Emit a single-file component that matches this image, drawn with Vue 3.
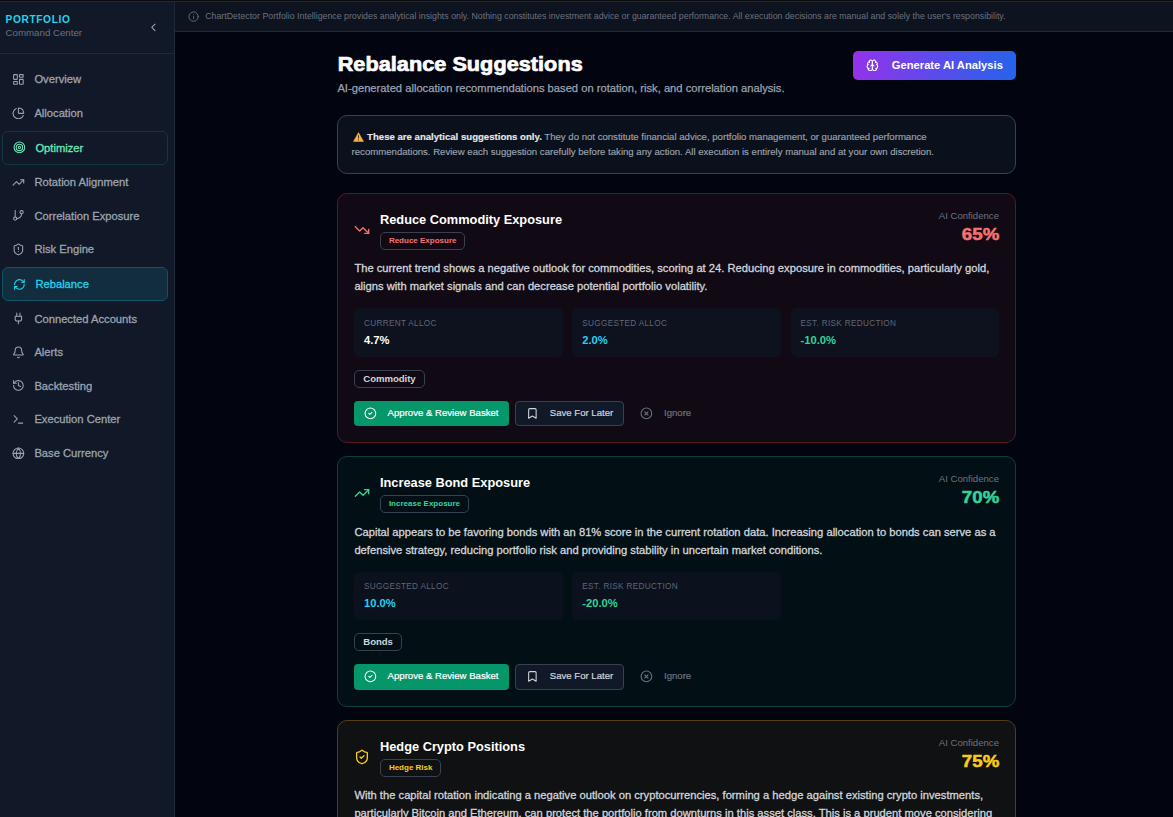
<script setup>
const icons = {
    dashboard: '<rect width="7" height="9" x="3" y="3" rx="1"/><rect width="7" height="5" x="14" y="3" rx="1"/><rect width="7" height="9" x="14" y="12" rx="1"/><rect width="7" height="5" x="3" y="16" rx="1"/>',
    pie: '<path d="M21 12c.552 0 1.005-.449.95-.998a10 10 0 0 0-8.953-8.951c-.55-.055-.998.398-.998.95v8a1 1 0 0 0 1 1z"/><path d="M21.21 15.89A10 10 0 1 1 8 2.83"/>',
    target: '<circle cx="12" cy="12" r="10"/><circle cx="12" cy="12" r="6"/><circle cx="12" cy="12" r="2"/>',
    up: '<path d="M16 7h6v6"/><path d="m22 7-8.5 8.5-5-5L2 17"/>',
    down: '<path d="M16 17h6v-6"/><path d="m22 17-8.5-8.5-5 5L2 7"/>',
    branch: '<line x1="6" x2="6" y1="3" y2="15"/><circle cx="18" cy="6" r="3"/><circle cx="6" cy="18" r="3"/><path d="M18 9a9 9 0 0 1-9 9"/>',
    shieldAlert: '<path d="M20 13c0 5-3.5 7.5-7.66 8.95a1 1 0 0 1-.67-.01C7.5 20.5 4 18 4 13V6a1 1 0 0 1 1-1c2 0 4.5-1.2 6.24-2.72a1.17 1.17 0 0 1 1.52 0C14.51 3.81 17 5 19 5a1 1 0 0 1 1 1z"/><path d="M12 8v4"/><path d="M12 16h.01"/>',
    shieldCheck: '<path d="M20 13c0 5-3.5 7.5-7.66 8.95a1 1 0 0 1-.67-.01C7.5 20.5 4 18 4 13V6a1 1 0 0 1 1-1c2 0 4.5-1.2 6.24-2.72a1.17 1.17 0 0 1 1.52 0C14.51 3.81 17 5 19 5a1 1 0 0 1 1 1z"/><path d="m9 12 2 2 4-4"/>',
    refresh: '<path d="M3 12a9 9 0 0 1 9-9 9.75 9.75 0 0 1 6.74 2.74L21 8"/><path d="M21 3v5h-5"/><path d="M21 12a9 9 0 0 1-9 9 9.75 9.75 0 0 1-6.74-2.74L3 16"/><path d="M8 16H3v5"/>',
    plug: '<path d="M12 22v-5"/><path d="M9 8V2"/><path d="M15 8V2"/><path d="M18 8v5a4 4 0 0 1-4 4h-4a4 4 0 0 1-4-4V8Z"/>',
    bell: '<path d="M10.268 21a2 2 0 0 0 3.464 0"/><path d="M3.262 15.326A1 1 0 0 0 4 17h16a1 1 0 0 0 .74-1.673C19.41 13.956 18 12.499 18 8A6 6 0 0 0 6 8c0 4.499-1.411 5.956-2.738 7.326"/>',
    history: '<path d="M3 12a9 9 0 1 0 9-9 9.75 9.75 0 0 0-6.74 2.74L3 8"/><path d="M3 3v5h5"/><path d="M12 7v5l4 2"/>',
    terminal: '<path d="m4 17 6-6-6-6"/><path d="M12 19h8"/>',
    globe: '<circle cx="12" cy="12" r="10"/><path d="M12 2a14.5 14.5 0 0 0 0 20 14.5 14.5 0 0 0 0-20"/><path d="M2 12h20"/>',
    info: '<circle cx="12" cy="12" r="10"/><path d="M12 16v-4"/><path d="M12 8h.01"/>',
    chevron: '<path d="m15 18-6-6 6-6"/>',
    brain: '<path d="M12 5a3 3 0 1 0-5.997.125 4 4 0 0 0-2.526 5.77 4 4 0 0 0 .556 6.588A4 4 0 1 0 12 18Z"/><path d="M12 5a3 3 0 1 1 5.997.125 4 4 0 0 1 2.526 5.77 4 4 0 0 1-.556 6.588A4 4 0 1 1 12 18Z"/><path d="M15 13a4.5 4.5 0 0 1-3-4 4.5 4.5 0 0 1-3 4"/><path d="M17.599 6.5a3 3 0 0 0 .399-1.375"/><path d="M6.003 5.125A3 3 0 0 0 6.401 6.5"/><path d="M3.477 10.896a4 4 0 0 1 .585-.396"/><path d="M19.938 10.5a4 4 0 0 1 .585.396"/><path d="M6 18a4 4 0 0 1-1.967-.516"/><path d="M19.967 17.484A4 4 0 0 1 18 18"/>',
    check: '<circle cx="12" cy="12" r="10"/><path d="m9 12 2 2 4-4"/>',
    bookmark: '<path d="m19 21-7-4-7 4V5a2 2 0 0 1 2-2h10a2 2 0 0 1 2 2v16z"/>',
    cross: '<circle cx="12" cy="12" r="10"/><path d="m15 9-6 6"/><path d="m9 9 6 6"/>'
}

const nav = [
    { label: 'Overview', icon: 'dashboard' },
    { label: 'Allocation', icon: 'pie' },
    { label: 'Optimizer', icon: 'target', state: 'featured' },
    { label: 'Rotation Alignment', icon: 'up' },
    { label: 'Correlation Exposure', icon: 'branch' },
    { label: 'Risk Engine', icon: 'shieldAlert' },
    { label: 'Rebalance', icon: 'refresh', state: 'active' },
    { label: 'Connected Accounts', icon: 'plug' },
    { label: 'Alerts', icon: 'bell' },
    { label: 'Backtesting', icon: 'history' },
    { label: 'Execution Center', icon: 'terminal' },
    { label: 'Base Currency', icon: 'globe' }
]

const suggestions = [
    {
        title: 'Reduce Commodity Exposure',
        badge: 'Reduce Exposure',
        tone: 'red',
        icon: 'down',
        confidence: '65%',
        lines: [
            'The current trend shows a negative outlook for commodities, scoring at 24. Reducing exposure in commodities, particularly gold,',
            'aligns with market signals and can decrease potential portfolio volatility.'
        ],
        stats: [
            { label: 'Current Alloc', value: '4.7%', color: 'white' },
            { label: 'Suggested Alloc', value: '2.0%', color: 'cyan' },
            { label: 'Est. Risk Reduction', value: '-10.0%', color: 'green' }
        ],
        tag: 'Commodity'
    },
    {
        title: 'Increase Bond Exposure',
        badge: 'Increase Exposure',
        tone: 'emerald',
        icon: 'up',
        confidence: '70%',
        lines: [
            'Capital appears to be favoring bonds with an 81% score in the current rotation data. Increasing allocation to bonds can serve as a',
            'defensive strategy, reducing portfolio risk and providing stability in uncertain market conditions.'
        ],
        stats: [
            { label: 'Suggested Alloc', value: '10.0%', color: 'cyan' },
            { label: 'Est. Risk Reduction', value: '-20.0%', color: 'green' }
        ],
        tag: 'Bonds'
    },
    {
        title: 'Hedge Crypto Positions',
        badge: 'Hedge Risk',
        tone: 'yellow',
        icon: 'shieldCheck',
        confidence: '75%',
        lines: [
            'With the capital rotation indicating a negative outlook on cryptocurrencies, forming a hedge against existing crypto investments,',
            'particularly Bitcoin and Ethereum, can protect the portfolio from downturns in this asset class. This is a prudent move considering'
        ]
    }
]
</script>

<template>
    <div class="page">
        <aside class="sidebar">
            <div class="brand">
                <div>
                    <div class="brand-name">PORTFOLIO</div>
                    <div class="brand-sub">Command Center</div>
                </div>
                <svg class="icon collapse" viewBox="0 0 24 24" v-html="icons.chevron"></svg>
            </div>
            <nav>
                <a v-for="n in nav" :key="n.label" class="nav-item" :class="n.state">
                    <svg class="icon" viewBox="0 0 24 24" v-html="icons[n.icon]"></svg>
                    <span>{{ n.label }}</span>
                </a>
            </nav>
        </aside>

        <div class="main">
            <div class="disclaimer">
                <svg class="icon" viewBox="0 0 24 24" v-html="icons.info"></svg>
                <span>ChartDetector Portfolio Intelligence provides analytical insights only. Nothing constitutes investment advice or guaranteed performance. All execution decisions are manual and solely the user's responsibility.</span>
            </div>

            <div class="content">
                <header class="head">
                    <div>
                        <h1>Rebalance Suggestions</h1>
                        <p class="subtitle">AI-generated allocation recommendations based on rotation, risk, and correlation analysis.</p>
                    </div>
                    <button class="btn-generate">
                        <svg class="icon" viewBox="0 0 24 24" v-html="icons.brain"></svg>
                        <span>Generate AI Analysis</span>
                    </button>
                </header>

                <div class="notice">
                    <div>
                        <svg class="warn" viewBox="0 0 12 11">
                            <path d="M6 .6 11.5 10.4H.5Z" fill="#fbb03f" stroke="#fbb03f" stroke-width=".6" stroke-linejoin="round" />
                            <path d="M6 3.6v3.5M6 8.1v1.2" stroke="#4b3a28" stroke-width="1.1" />
                        </svg>
                        <b>These are analytical suggestions only.</b> <span>They do not constitute financial advice, portfolio management, or guaranteed performance</span>
                    </div>
                    <div>recommendations. Review each suggestion carefully before taking any action. All execution is entirely manual and at your own discretion.</div>
                </div>

                <section v-for="s in suggestions" :key="s.title" class="card" :class="s.tone">
                    <div class="card-head">
                        <svg class="icon tone" viewBox="0 0 24 24" v-html="icons[s.icon]"></svg>
                        <div class="card-title">
                            <h2>{{ s.title }}</h2>
                            <span class="badge tone">{{ s.badge }}</span>
                        </div>
                        <div class="confidence">
                            <div class="confidence-label">AI Confidence</div>
                            <div class="confidence-value tone">{{ s.confidence }}</div>
                        </div>
                    </div>
                    <div class="desc">
                        <div v-for="l in s.lines" :key="l">{{ l }}</div>
                    </div>
                    <template v-if="s.stats">
                        <div class="stats">
                            <div v-for="st in s.stats" :key="st.label" class="stat">
                                <div class="stat-label">{{ st.label }}</div>
                                <div class="stat-value" :class="st.color">{{ st.value }}</div>
                            </div>
                        </div>
                        <span class="tag">{{ s.tag }}</span>
                        <div class="actions">
                            <button class="btn btn-approve">
                                <svg class="icon" viewBox="0 0 24 24" v-html="icons.check"></svg>
                                <span>Approve &amp; Review Basket</span>
                            </button>
                            <button class="btn btn-save">
                                <svg class="icon" viewBox="0 0 24 24" v-html="icons.bookmark"></svg>
                                <span>Save For Later</span>
                            </button>
                            <button class="btn btn-ignore">
                                <svg class="icon" viewBox="0 0 24 24" v-html="icons.cross"></svg>
                                <span>Ignore</span>
                            </button>
                        </div>
                    </template>
                </section>
            </div>
        </div>
    </div>
</template>

<style>
body {
    background: #02050f;
    overflow: hidden;
}
</style>

<style scoped>
* {
    box-sizing: border-box;
}

.page {
    display: flex;
    height: 817px;
    overflow: hidden;
    border-top: 1px solid #0b0b0d;
    background: #02050f;
    color: #fff;
    font-family: "Liberation Sans", Arial, sans-serif;
    white-space: nowrap;
}

h1,
h2,
p {
    margin: 0;
}

button {
    border: 0;
    font-family: inherit;
}

.icon {
    width: 12.8px;
    height: 12.8px;
    flex: none;
    fill: none;
    stroke: currentColor;
    stroke-width: 2;
    stroke-linecap: round;
    stroke-linejoin: round;
}

.sidebar {
    width: 175px;
    flex: none;
    background: #111827;
    border-right: 1px solid #1f2937;
    border-top: 1px solid #29272b;
}

.brand {
    display: flex;
    justify-content: space-between;
    height: 52px;
    padding: 10px 14px 0 5.6px;
    border-bottom: 1px solid #1f2937;
}

.brand-name {
    font-size: 10.2px;
    line-height: 15px;
    font-weight: bold;
    letter-spacing: 0.6px;
    color: #22d3ee;
}

.brand-sub {
    font-size: 9.7px;
    line-height: 12px;
    color: #6b7280;
}

.collapse {
    margin-top: 9px;
    color: #9ca3af;
}

nav {
    display: flex;
    flex-direction: column;
    gap: 1.6px;
    padding: 9.4px 6px 0 2px;
}

.nav-item {
    display: flex;
    align-items: center;
    gap: 9.6px;
    height: 32px;
    padding-left: 10px;
    border-radius: 6px;
    font-size: 11.2px;
    color: #9ca3af;
    -webkit-text-stroke: 0.3px currentColor;
}

.nav-item.featured,
.nav-item.active {
    height: 34px;
    border: 1px solid #11383c;
    color: #6ee7b7;
}

.nav-item.active {
    background: #112d3e;
    border-color: #105468;
    color: #22d3ee;
}

.main {
    flex: 1;
    min-width: 0;
    border-top: 1px solid #29272b;
}

.disclaimer {
    display: flex;
    align-items: center;
    gap: 6px;
    height: 30px;
    padding: 0 13px;
    background: #0d131f;
    border-bottom: 1px solid #1f2937;
    font-size: 8.8px;
    line-height: 12px;
    color: #6b7280;
}

.disclaimer span {
    padding-bottom: 1px;
}

.disclaimer .icon {
    width: 11.2px;
    height: 11.2px;
}

.content {
    width: 679px;
    margin-left: 162px;
    padding-top: 19px;
}

.head {
    display: flex;
    justify-content: space-between;
    height: 64px;
}

/* extra-black look: bold, stroked and slightly expanded */
h1 {
    width: fit-content;
    padding-left: 0.6px;
    font-size: 19.4px;
    line-height: 26px;
    letter-spacing: 0.05px;
    transform: scaleX(1.115);
    transform-origin: left;
    -webkit-text-stroke: 0.7px #fff;
}

.subtitle {
    margin-top: 3px;
    padding-left: 0.4px;
    font-size: 11.2px;
    line-height: 16px;
    color: #9ca3af;
    -webkit-text-stroke: 0.25px currentColor;
}

.btn-generate {
    display: flex;
    align-items: center;
    gap: 13px;
    width: 163px;
    height: 29px;
    padding: 0 13px 1px;
    border-radius: 5px;
    background: linear-gradient(90deg, #9333ea, #2563eb);
    color: #fff;
    font-size: 11.2px;
    font-weight: bold;
}

.notice {
    height: 59px;
    padding: 13px 13.6px;
    border: 1px solid #374151;
    border-radius: 10px;
    background: #0a101c;
    font-size: 9.6px;
    line-height: 15px;
    color: #9ca3af;
    -webkit-text-stroke: 0.15px currentColor;
}

.notice b {
    color: #e5e7eb;
}

.warn {
    width: 11px;
    height: 10px;
    margin: 0 3.5px 0 1px;
    vertical-align: -1.5px;
}

.card {
    height: 250.2px;
    margin-top: 13.2px;
    padding: 16px 16px 0 16.4px;
    border: 1px solid;
    border-radius: 10px;
}

.notice + .card {
    margin-top: 19px;
}

.card.red {
    background: #110a14;
    border-color: #551a22;
}

.card.emerald {
    background: #021016;
    border-color: #084337;
}

.card.yellow {
    background: #101112;
    border-color: #51400d;
}

.red .tone {
    color: #f87171;
}

.emerald .tone {
    color: #34d399;
}

.yellow .tone {
    color: #facc15;
}

.card-head {
    display: flex;
    align-items: center;
    height: 40px;
}

.card-head .icon {
    width: 16px;
    height: 16px;
}

.card-title {
    display: flex;
    flex-direction: column;
    align-items: flex-start;
    align-self: flex-start;
    margin-left: 9.6px;
}

h2 {
    height: 18px;
    font-size: 12.8px;
    line-height: 19px;
}

.badge {
    height: 18px;
    margin-top: 4px;
    padding: 0 7.9px;
    border: 1px solid #374151;
    border-radius: 5px;
    font-size: 8px;
    line-height: 15px;
    font-weight: bold;
}

.confidence {
    align-self: flex-start;
    margin-left: auto;
    text-align: right;
}

.confidence-label {
    font-size: 9.6px;
    line-height: 12px;
    color: #6b7280;
}

.confidence-value {
    font-size: 16.4px;
    line-height: 24.6px;
    font-weight: bold;
    transform: scaleX(1.14);
    transform-origin: right;
    -webkit-text-stroke: 0.5px currentColor;
}

.desc {
    margin-top: 9.2px;
    font-size: 11.2px;
    line-height: 18.2px;
    color: #d1d5db;
    -webkit-text-stroke: 0.3px currentColor;
}

.stats {
    display: grid;
    grid-template-columns: repeat(3, 1fr);
    gap: 9.6px;
    height: 48.8px;
    margin: 12.6px -0.2px 12.8px -0.4px;
}

.stat {
    padding: 8.8px 10px;
    border-radius: 6px;
    background: #0e121e;
}

.emerald .stat {
    background: #0b111d;
}

.stat-label {
    font-size: 8.2px;
    line-height: 13px;
    letter-spacing: 0.32px;
    text-transform: uppercase;
    color: #5f6776;
}

.stat-value {
    margin-top: 2px;
    font-size: 11.2px;
    line-height: 16px;
    font-weight: bold;
}

.stat-value.white {
    color: #fff;
}

.stat-value.cyan {
    color: #22d3ee;
}

.stat-value.green {
    color: #34d399;
}

.tag {
    display: block;
    width: fit-content;
    height: 18px;
    margin-left: -0.4px;
    padding: 0 8.3px;
    border: 1px solid #374151;
    border-radius: 5px;
    font-size: 9.6px;
    line-height: 16px;
    font-weight: bold;
    letter-spacing: -0.05px;
    color: #d1d5db;
}

.actions {
    display: flex;
    gap: 6.2px;
    margin-top: 12.8px;
    margin-left: -0.4px;
}

.btn {
    display: flex;
    align-items: center;
    height: 25.6px;
    gap: 11px;
    padding: 0 9.8px;
    border-radius: 4px;
    background: none;
    font-size: 9.6px;
    line-height: 12px;
    -webkit-text-stroke: 0.2px currentColor;
}

.btn span {
    padding-bottom: 0.8px;
}

.btn-approve {
    width: 155px;
    background: #059669;
    color: #fff;
}

.btn-save {
    width: 109px;
    border: 1px solid #374151;
    background: #111827;
    color: #d1d5db;
}

.btn-ignore {
    color: #6b7280;
}
</style>
